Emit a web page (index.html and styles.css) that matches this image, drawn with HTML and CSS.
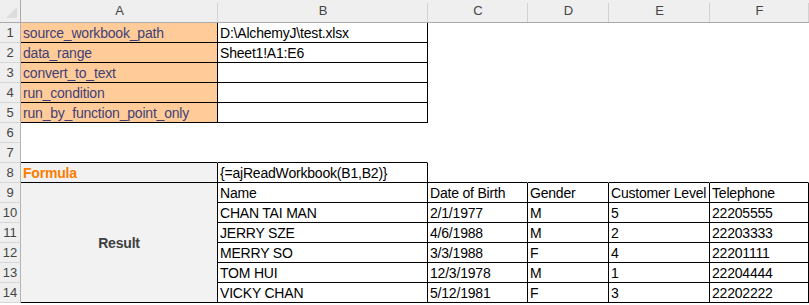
FILE: index.html
```html
<!DOCTYPE html>
<html>
<head>
    <title>AlchemyJ - ajReadWorkbook</title>
    <link rel="stylesheet" href="styles.css">
</head>
<body>
    <div class="sheet">
        <!-- column headers -->
        <div class="corner">
            <svg width="21" height="23" viewBox="0 0 21 23"><polygon points="17,7 17,18 6,18" fill="#dcdcdc"/></svg>
        </div>
        <div class="colhead">A</div>
        <div class="colhead">B</div>
        <div class="colhead">C</div>
        <div class="colhead">D</div>
        <div class="colhead">E</div>
        <div class="colhead">F</div>

        <!-- parameters -->
        <div class="rowhead">1</div>
        <div class="cell input box">source_workbook_path</div>
        <div class="cell box">D:\AlchemyJ\test.xlsx</div>
        <div class="cell"></div><div class="cell"></div><div class="cell"></div><div class="cell"></div>

        <div class="rowhead">2</div>
        <div class="cell input box">data_range</div>
        <div class="cell box">Sheet1!A1:E6</div>
        <div class="cell"></div><div class="cell"></div><div class="cell"></div><div class="cell"></div>

        <div class="rowhead">3</div>
        <div class="cell input box">convert_to_text</div>
        <div class="cell box"></div>
        <div class="cell"></div><div class="cell"></div><div class="cell"></div><div class="cell"></div>

        <div class="rowhead">4</div>
        <div class="cell input box">run_condition</div>
        <div class="cell box"></div>
        <div class="cell"></div><div class="cell"></div><div class="cell"></div><div class="cell"></div>

        <div class="rowhead">5</div>
        <div class="cell input box">run_by_function_point_only</div>
        <div class="cell box"></div>
        <div class="cell"></div><div class="cell"></div><div class="cell"></div><div class="cell"></div>

        <div class="rowhead">6</div>
        <div class="cell"></div><div class="cell"></div><div class="cell"></div>
        <div class="cell"></div><div class="cell"></div><div class="cell"></div>

        <div class="rowhead">7</div>
        <div class="cell bb"></div><div class="cell bb"></div><div class="cell"></div>
        <div class="cell"></div><div class="cell"></div><div class="cell"></div>

        <!-- formula -->
        <div class="rowhead">8</div>
        <div class="cell calc box">Formula</div>
        <div class="cell box">{=ajReadWorkbook(B1,B2)}</div>
        <div class="cell bb"></div><div class="cell bb"></div><div class="cell bb"></div><div class="cell bb"></div>

        <!-- result -->
        <div class="rowhead">9</div>
        <div class="cell output box">Result</div>
        <div class="cell box">Name</div>
        <div class="cell box">Date of Birth</div>
        <div class="cell box">Gender</div>
        <div class="cell box">Customer Level</div>
        <div class="cell box">Telephone</div>

        <div class="rowhead">10</div>
        <div class="cell box">CHAN TAI MAN</div>
        <div class="cell box">2/1/1977</div>
        <div class="cell box">M</div>
        <div class="cell box">5</div>
        <div class="cell box">22205555</div>

        <div class="rowhead">11</div>
        <div class="cell box">JERRY SZE</div>
        <div class="cell box">4/6/1988</div>
        <div class="cell box">M</div>
        <div class="cell box">2</div>
        <div class="cell box">22203333</div>

        <div class="rowhead">12</div>
        <div class="cell box">MERRY SO</div>
        <div class="cell box">3/3/1988</div>
        <div class="cell box">F</div>
        <div class="cell box">4</div>
        <div class="cell box">22201111</div>

        <div class="rowhead">13</div>
        <div class="cell box">TOM HUI</div>
        <div class="cell box">12/3/1978</div>
        <div class="cell box">M</div>
        <div class="cell box">1</div>
        <div class="cell box">22204444</div>

        <div class="rowhead">14</div>
        <div class="cell box">VICKY CHAN</div>
        <div class="cell box">5/12/1981</div>
        <div class="cell box">F</div>
        <div class="cell box">3</div>
        <div class="cell box">22202222</div>
    </div>
</body>
</html>
```

FILE: styles.css
```css
body {
    margin: 0;
    background: #fff;
    font-family: "Liberation Sans", Arial, sans-serif;
    overflow: hidden;
}
.sheet {
    display: grid;
    grid-template-columns: 21px 197px 210px 100px 81px 101px 99px;
    grid-template-rows: 23px repeat(14, 20px);
}
.corner {
    background: #efefef;
    border-right: 1px solid #ababab;
    border-bottom: 1px solid #ababab;
    box-sizing: border-box;
}
.corner svg {
    display: block;
}
.colhead {
    background:
        linear-gradient(#d2d2d2, #d2d2d2) right 3px / 1px 19px no-repeat,
        #efefef;
    border-bottom: 1px solid #ababab;
    color: #444;
    font-size: 13px;
    line-height: 22px;
    text-align: center;
}
.rowhead {
    background: #efefef;
    border-right: 1px solid #b4b4b4;
    border-bottom: 1px solid #d6d6d6;
    color: #444;
    font-size: 13px;
    line-height: 20px;
    text-align: center;
    box-sizing: border-box;
}
.cell {
    border: 0 solid transparent;
    border-width: 0 1px 1px 0;
    padding: 1px 2px 0;
    font-size: 14px;
    letter-spacing: -0.2px;
    line-height: 18px;
    color: #000;
    white-space: nowrap;
    overflow: hidden;
}
.box {
    border-color: #000;
}
.bb {
    border-bottom-color: #000;
}
/* excel cell styles */
.input {
    background: #ffcc99;
    color: #3f3f76;
}
.calc {
    background: #f2f2f2;
    color: #fa7d00;
    font-weight: bold;
}
.output {
    grid-row: span 6;
    background: #f2f2f2;
    color: #3f3f3f;
    font-weight: bold;
    display: flex;
    align-items: center;
    justify-content: center;
}
```
